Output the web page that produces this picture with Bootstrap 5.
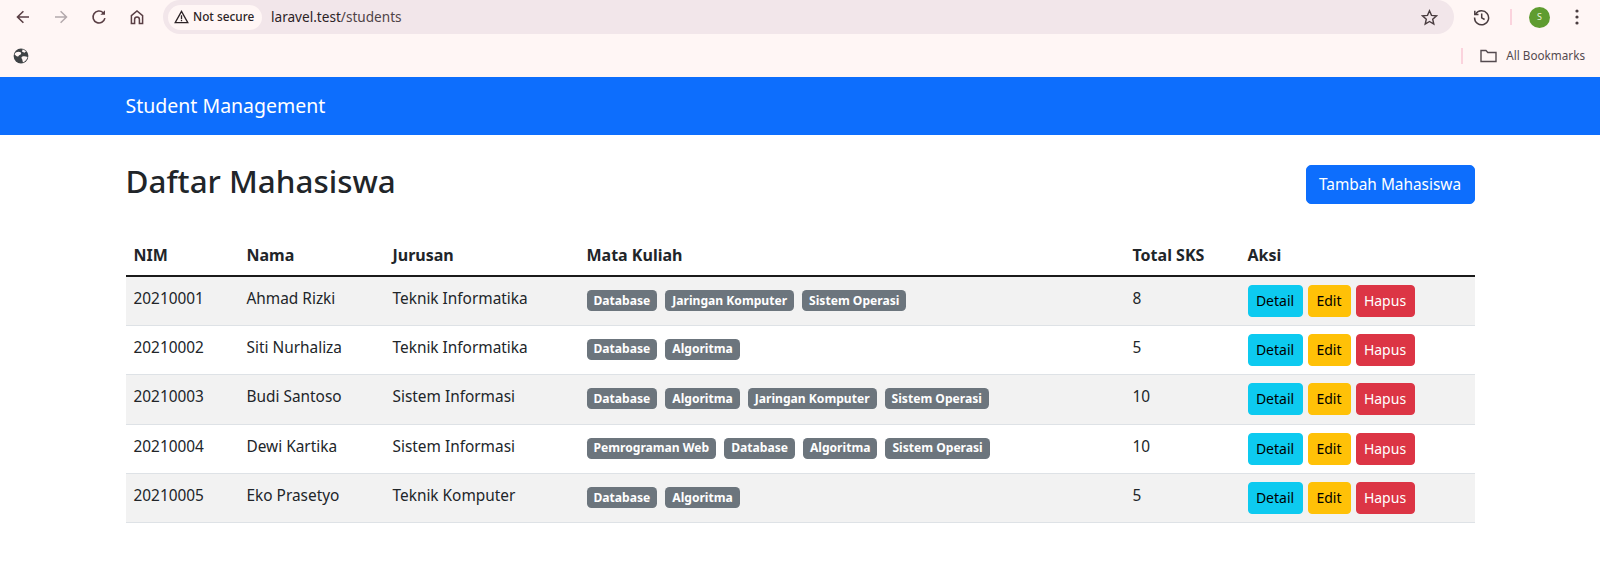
<!DOCTYPE html>
<html lang="en">
<head>
    <meta charset="UTF-8">
    <meta name="viewport" content="width=device-width, initial-scale=1.0">
    <title>Student Management</title>
    <link href="https://cdn.jsdelivr.net/npm/bootstrap@5.3.0/dist/css/bootstrap.min.css" rel="stylesheet">
    <style>
        body {
            font-family: "Noto Sans", "Open Sans", sans-serif;
            font-size: 15.4px;
            color: #212529;
            overflow: hidden;
        }
        .chrome-bar {
            height: 76.5px;
            background: #fff6f5;
            color: #4a3d40;
        }
        .chrome-top {
            height: 38px;
            padding: 0 0 4px 4px;
        }
        .chrome-btn {
            width: 38px;
            height: 34px;
            flex: none;
        }
        .omnibox {
            width: 1291px;
            height: 34px;
            margin-left: 7px;
            background: #f2e6ea;
            border-radius: 17px;
            padding: 0 16px 0 5px;
        }
        .secure-chip {
            height: 25px;
            width: 94px;
            padding-left: 6px;
            background: #fff6f5;
            border-radius: 13px;
            font-size: 11.8px;
            font-weight: 500;
            color: #2c2326;
        }
        .url-text {
            font-size: 13.6px;
            margin-left: 9px;
            padding-top: 1px;
            color: #4f4347;
        }
        .url-text b {
            font-weight: 400;
            color: #2c2326;
        }
        .pink-sep {
            width: 2px;
            height: 16px;
            background: #fbd3dd;
        }
        .avatar-dot {
            width: 21px;
            height: 21px;
            background: #5f9c30;
            color: #e8f3dc;
            font-size: 9px;
        }
        .chrome-bottom {
            height: 38.5px;
            padding: 0 15px 2px 13px;
        }
        .bookmarks-text {
            font-size: 11.7px;
            color: #544a4f;
            margin-left: 9px;
        }
        .page-wrap {
            width: 1349px;
            margin-left: 125.5px;
        }
        .top-nav {
            height: 58.5px;
            padding: 0;
        }
        .top-nav .navbar-brand {
            font-size: 19.5px;
            margin: 0;
            padding: 3px 0 0;
        }
        .page-title {
            font-size: 31.4px;
            font-weight: 500;
            margin: 0;
            line-height: 32px;
        }
        .title-row {
            padding-top: 30px;
            height: 99px;
        }
        .add-btn {
            width: 169px;
            height: 39px;
            font-size: 15.4px;
            line-height: 37px;
            padding: 0;
            border-radius: 5px;
        }
        .student-table {
            table-layout: fixed;
            margin: 0;
            font-size: 15.4px;
        }
        .student-table thead th {
            height: 42px;
            font-size: 16px;
            font-weight: 700;
            padding: 0 8px;
            vertical-align: middle;
            border-bottom: 2px solid #1a1a1a;
        }
        .student-table tbody td {
            height: 49.4px;
            padding: 10px 8px 0;
            vertical-align: top;
            line-height: 24px;
        }
        .student-table tbody td.cell-tight {
            padding-top: 8px;
        }
        .tag-list {
            display: flex;
            gap: 8px;
            padding-top: 5px;
        }
        .tag-list .badge {
            font-size: 12.1px;
            line-height: 14px;
            padding: 3.5px 7px;
            border-radius: 4.5px;
        }
        .action-list {
            display: flex;
            gap: 5px;
        }
        .action-list .btn {
            height: 32px;
            padding: 0;
            font-size: 14px;
            line-height: 30px;
            border-radius: 4px;
        }
        .act-detail { width: 55px; }
        .act-edit { width: 43px; }
        .act-delete { width: 59px; }
    </style>
</head>
<body>
    <div class="chrome-bar">
        <div class="chrome-top d-flex align-items-center">
            <div class="chrome-btn d-flex align-items-center justify-content-center"><svg width="16" height="16" viewBox="0 0 16 16" fill="none" stroke="#5a3f45" stroke-width="1.6"><path d="M14 8H2.5M8.4 2.2 2.5 8l5.9 5.8"/></svg></div>
            <div class="chrome-btn d-flex align-items-center justify-content-center"><svg width="16" height="16" viewBox="0 0 16 16" fill="none" stroke="#b3a9ac" stroke-width="1.5"><path d="M2 8h11.5M7.6 2.2 13.5 8l-5.9 5.8"/></svg></div>
            <div class="chrome-btn d-flex align-items-center justify-content-center"><svg width="16" height="16" viewBox="0 0 16 16" fill="none" stroke="#5a3f45" stroke-width="1.6"><path d="M13.9 9.2A6 6 0 1 1 12.2 3.7"/><path d="M14 1.2v4.6H9.4z" fill="#5a3f45" stroke="none"/></svg></div>
            <div class="chrome-btn d-flex align-items-center justify-content-center"><svg width="16" height="16" viewBox="0 0 16 16" fill="none" stroke="#5a3f45" stroke-width="1.5"><path d="M2.4 14.6V6.6L8 1.9l5.6 4.7v8h-3.2v-4.1a2.4 2.4 0 0 0-4.8 0v4.1z"/></svg></div>
            <div class="omnibox d-flex align-items-center">
                <div class="secure-chip d-flex align-items-center gap-1">
                    <svg width="15" height="14" viewBox="0 0 15 14" fill="none" stroke="#2c2326" stroke-width="1.3"><path d="M7.5 1.4 1.2 12.7h12.6z"/><path d="M7.5 5.2v4M7.5 10v1.3"/></svg>
                    <span>Not secure</span>
                </div>
                <span class="url-text"><b>laravel.test</b>/students</span>
                <svg class="ms-auto" width="17" height="17" viewBox="0 0 17 17" fill="none" stroke="#4a3d40" stroke-width="1.4"><path d="m8.5 1.8 2 4.6 5 .5-3.8 3.3 1.1 4.9-4.3-2.6-4.3 2.6 1.1-4.9L1.5 6.9l5-.5z"/></svg>
            </div>
            <svg style="margin-left:19px;flex:none" width="17" height="17" viewBox="0 0 17 17" fill="none" stroke="#4a3d40" stroke-width="1.5"><path d="M2.6 5.2A7 7 0 1 1 1.6 8.5"/><path d="M1.8 1.8v3.7h3.7"/><path d="M8.7 4.6v4.2l2.9 1.7"/></svg>
            <div class="pink-sep" style="margin-left:20px"></div>
            <div class="avatar-dot rounded-circle d-flex align-items-center justify-content-center" style="margin-left:17px">S</div>
            <svg style="margin-left:25px" width="4" height="16" viewBox="0 0 4 16" fill="#4a3d40"><circle cx="2" cy="2" r="1.6"/><circle cx="2" cy="8" r="1.6"/><circle cx="2" cy="14" r="1.6"/></svg>
        </div>
        <div class="chrome-bottom d-flex align-items-center">
            <svg width="16" height="16" viewBox="0 0 16 16"><circle cx="8" cy="8" r="7.4" fill="#3f4346"/><path d="M1.5 6.2C3 3.5 6 3.2 8 4.6c.6 1.4-.5 2.6-2 2.7-.3 1.5-2 1.6-3 .5zM14.6 9c-1.6-.6-4-1-5.6-.2-1 .7-.4 2 .3 2.6.2 1 .3 2 .7 3 2.3-.9 4-3 4.6-5.4zM9.8 1.2l3.2 2-1.5 1.6-2.6-1.3z" fill="#fff6f5"/></svg>
            <div class="ms-auto d-flex align-items-center">
                <div class="pink-sep"></div>
                <svg style="margin-left:17px" width="17" height="14" viewBox="0 0 17 14" fill="none" stroke="#544a4f" stroke-width="1.4"><path d="M1 12.5V1.5h5l1.8 2H16v9z"/></svg>
                <span class="bookmarks-text">All Bookmarks</span>
            </div>
        </div>
    </div>

    <nav class="navbar navbar-dark bg-primary top-nav">
        <div class="page-wrap">
            <a class="navbar-brand" href="#">Student Management</a>
        </div>
    </nav>

    <main class="page-wrap">
        <div class="title-row d-flex justify-content-between align-items-start">
            <h1 class="page-title">Daftar Mahasiswa</h1>
            <a href="#" class="btn btn-primary add-btn">Tambah Mahasiswa</a>
        </div>
        <table class="table table-striped student-table">
            <colgroup>
                <col style="width:113px"><col style="width:146px"><col style="width:194px"><col style="width:546px"><col style="width:115px"><col style="width:235px">
            </colgroup>
            <thead>
                <tr>
                    <th>NIM</th>
                    <th>Nama</th>
                    <th>Jurusan</th>
                    <th>Mata Kuliah</th>
                    <th>Total SKS</th>
                    <th>Aksi</th>
                </tr>
            </thead>
            <tbody>
                <tr>
                    <td>20210001</td><td>Ahmad Rizki</td><td>Teknik Informatika</td>
                    <td class="cell-tight"><div class="tag-list"><span class="badge bg-secondary">Database</span><span class="badge bg-secondary">Jaringan Komputer</span><span class="badge bg-secondary">Sistem Operasi</span></div></td>
                    <td>8</td>
                    <td class="cell-tight"><div class="action-list"><a href="#" class="btn btn-info act-detail">Detail</a><a href="#" class="btn btn-warning act-edit">Edit</a><a href="#" class="btn btn-danger act-delete">Hapus</a></div></td>
                </tr>
                <tr>
                    <td>20210002</td><td>Siti Nurhaliza</td><td>Teknik Informatika</td>
                    <td class="cell-tight"><div class="tag-list"><span class="badge bg-secondary">Database</span><span class="badge bg-secondary">Algoritma</span></div></td>
                    <td>5</td>
                    <td class="cell-tight"><div class="action-list"><a href="#" class="btn btn-info act-detail">Detail</a><a href="#" class="btn btn-warning act-edit">Edit</a><a href="#" class="btn btn-danger act-delete">Hapus</a></div></td>
                </tr>
                <tr>
                    <td>20210003</td><td>Budi Santoso</td><td>Sistem Informasi</td>
                    <td class="cell-tight"><div class="tag-list"><span class="badge bg-secondary">Database</span><span class="badge bg-secondary">Algoritma</span><span class="badge bg-secondary">Jaringan Komputer</span><span class="badge bg-secondary">Sistem Operasi</span></div></td>
                    <td>10</td>
                    <td class="cell-tight"><div class="action-list"><a href="#" class="btn btn-info act-detail">Detail</a><a href="#" class="btn btn-warning act-edit">Edit</a><a href="#" class="btn btn-danger act-delete">Hapus</a></div></td>
                </tr>
                <tr>
                    <td>20210004</td><td>Dewi Kartika</td><td>Sistem Informasi</td>
                    <td class="cell-tight"><div class="tag-list"><span class="badge bg-secondary">Pemrograman Web</span><span class="badge bg-secondary">Database</span><span class="badge bg-secondary">Algoritma</span><span class="badge bg-secondary">Sistem Operasi</span></div></td>
                    <td>10</td>
                    <td class="cell-tight"><div class="action-list"><a href="#" class="btn btn-info act-detail">Detail</a><a href="#" class="btn btn-warning act-edit">Edit</a><a href="#" class="btn btn-danger act-delete">Hapus</a></div></td>
                </tr>
                <tr>
                    <td>20210005</td><td>Eko Prasetyo</td><td>Teknik Komputer</td>
                    <td class="cell-tight"><div class="tag-list"><span class="badge bg-secondary">Database</span><span class="badge bg-secondary">Algoritma</span></div></td>
                    <td>5</td>
                    <td class="cell-tight"><div class="action-list"><a href="#" class="btn btn-info act-detail">Detail</a><a href="#" class="btn btn-warning act-edit">Edit</a><a href="#" class="btn btn-danger act-delete">Hapus</a></div></td>
                </tr>
            </tbody>
        </table>
    </main>
    <script src="https://cdn.jsdelivr.net/npm/bootstrap@5.3.0/dist/js/bootstrap.bundle.min.js"></script>
</body>
</html>
